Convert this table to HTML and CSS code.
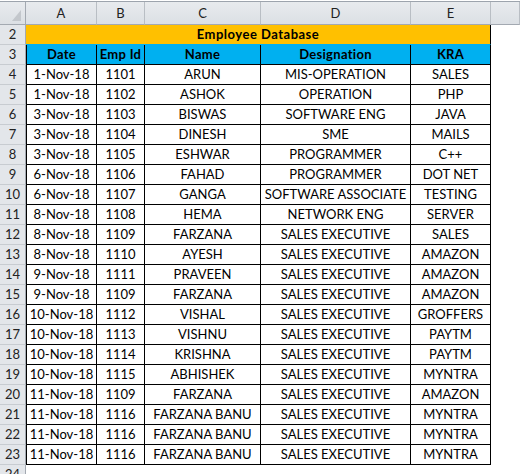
FILE: index.html
```html
<!DOCTYPE html>
<html lang="en">
<head>
<meta charset="utf-8">
<title>Employee Database</title>
<link rel="stylesheet" href="styles.css">
</head>
<body>
<div class="sheet">
  <div class="row colhead">
    <div class="corner"><svg width="25" height="22" viewBox="0 0 25 22"><polygon points="12,19 21,8 21,19" fill="#c3c7cc"/></svg></div>
    <div>A</div><div>B</div><div>C</div><div>D</div><div>E</div><div class="last"></div>
  </div>
  <div class="row"><div class="rh">2</div><div class="title">Employee Database</div><div></div></div>
  <div class="row"><div class="rh">3</div><div class="d hd first">Date</div><div class="d hd">Emp Id</div><div class="d hd">Name</div><div class="d hd">Designation</div><div class="d hd">KRA</div><div></div></div>
  <div class="row"><div class="rh">4</div><div class="d first">1-Nov-18</div><div class="d">1101</div><div class="d">ARUN</div><div class="d">MIS-OPERATION</div><div class="d">SALES</div><div></div></div>
  <div class="row"><div class="rh">5</div><div class="d first">1-Nov-18</div><div class="d">1102</div><div class="d">ASHOK</div><div class="d">OPERATION</div><div class="d">PHP</div><div></div></div>
  <div class="row"><div class="rh">6</div><div class="d first">3-Nov-18</div><div class="d">1103</div><div class="d">BISWAS</div><div class="d">SOFTWARE ENG</div><div class="d">JAVA</div><div></div></div>
  <div class="row"><div class="rh">7</div><div class="d first">3-Nov-18</div><div class="d">1104</div><div class="d">DINESH</div><div class="d">SME</div><div class="d">MAILS</div><div></div></div>
  <div class="row"><div class="rh">8</div><div class="d first">3-Nov-18</div><div class="d">1105</div><div class="d">ESHWAR</div><div class="d">PROGRAMMER</div><div class="d">C++</div><div></div></div>
  <div class="row"><div class="rh">9</div><div class="d first">6-Nov-18</div><div class="d">1106</div><div class="d">FAHAD</div><div class="d">PROGRAMMER</div><div class="d">DOT NET</div><div></div></div>
  <div class="row"><div class="rh">10</div><div class="d first">6-Nov-18</div><div class="d">1107</div><div class="d">GANGA</div><div class="d">SOFTWARE ASSOCIATE</div><div class="d">TESTING</div><div></div></div>
  <div class="row"><div class="rh">11</div><div class="d first">8-Nov-18</div><div class="d">1108</div><div class="d">HEMA</div><div class="d">NETWORK ENG</div><div class="d">SERVER</div><div></div></div>
  <div class="row"><div class="rh">12</div><div class="d first">8-Nov-18</div><div class="d">1109</div><div class="d">FARZANA</div><div class="d">SALES EXECUTIVE</div><div class="d">SALES</div><div></div></div>
  <div class="row"><div class="rh">13</div><div class="d first">8-Nov-18</div><div class="d">1110</div><div class="d">AYESH</div><div class="d">SALES EXECUTIVE</div><div class="d">AMAZON</div><div></div></div>
  <div class="row"><div class="rh">14</div><div class="d first">9-Nov-18</div><div class="d">1111</div><div class="d">PRAVEEN</div><div class="d">SALES EXECUTIVE</div><div class="d">AMAZON</div><div></div></div>
  <div class="row"><div class="rh">15</div><div class="d first">9-Nov-18</div><div class="d">1109</div><div class="d">FARZANA</div><div class="d">SALES EXECUTIVE</div><div class="d">AMAZON</div><div></div></div>
  <div class="row"><div class="rh">16</div><div class="d first">10-Nov-18</div><div class="d">1112</div><div class="d">VISHAL</div><div class="d">SALES EXECUTIVE</div><div class="d">GROFFERS</div><div></div></div>
  <div class="row"><div class="rh">17</div><div class="d first">10-Nov-18</div><div class="d">1113</div><div class="d">VISHNU</div><div class="d">SALES EXECUTIVE</div><div class="d">PAYTM</div><div></div></div>
  <div class="row"><div class="rh">18</div><div class="d first">10-Nov-18</div><div class="d">1114</div><div class="d">KRISHNA</div><div class="d">SALES EXECUTIVE</div><div class="d">PAYTM</div><div></div></div>
  <div class="row"><div class="rh">19</div><div class="d first">10-Nov-18</div><div class="d">1115</div><div class="d">ABHISHEK</div><div class="d">SALES EXECUTIVE</div><div class="d">MYNTRA</div><div></div></div>
  <div class="row"><div class="rh">20</div><div class="d first">11-Nov-18</div><div class="d">1109</div><div class="d">FARZANA</div><div class="d">SALES EXECUTIVE</div><div class="d">AMAZON</div><div></div></div>
  <div class="row"><div class="rh">21</div><div class="d first">11-Nov-18</div><div class="d">1116</div><div class="d">FARZANA BANU</div><div class="d">SALES EXECUTIVE</div><div class="d">MYNTRA</div><div></div></div>
  <div class="row"><div class="rh">22</div><div class="d first">11-Nov-18</div><div class="d">1116</div><div class="d">FARZANA BANU</div><div class="d">SALES EXECUTIVE</div><div class="d">MYNTRA</div><div></div></div>
  <div class="row"><div class="rh">23</div><div class="d first">11-Nov-18</div><div class="d">1116</div><div class="d">FARZANA BANU</div><div class="d">SALES EXECUTIVE</div><div class="d">MYNTRA</div><div></div></div>
  <div class="row"><div class="rh">24</div><div></div><div></div><div></div><div></div><div></div><div></div></div>
</div>
</body>
</html>
```

FILE: styles.css
```css
html, body {
  margin: 0;
  padding: 0;
  background: #ffffff;
  overflow: hidden;
}

.sheet {
  padding-top: 1px;
  font-family: Lato, "Liberation Sans", sans-serif;
  font-size: 13px;
  color: #000000;
}

.row {
  display: grid;
  grid-template-columns: 26px 71px 48px 116px 150px 80px 1fr;
  height: 20px;
}

.row > div {
  box-sizing: border-box;
  text-align: center;
  line-height: 19px;
  white-space: nowrap;
  overflow: hidden;
}

.colhead {
  box-sizing: border-box;
  height: 24px;
  border-top: 1px solid #9da4ad;
  background: linear-gradient(#e8ebee, #dbdfe4);
}

.colhead > div {
  border-right: 1px solid #b9bec4;
  border-bottom: 1px solid #a3a9b1;
  line-height: 22px;
  color: #222222;
}

.colhead > .corner {
  border-right-color: #a3a9b1;
}

.corner svg {
  display: block;
}

.rh {
  background: #e3e6ea;
  border-right: 1px solid #a3a9b1;
  border-bottom: 1px solid #c8ccd1;
  color: #222222;
}

.title {
  grid-column: span 5;
  background: #ffc000;
  border-right: 1px solid #000000;
  border-bottom: 1px solid #00b0f0;
  font-weight: bold;
  letter-spacing: 0.5px;
}

.d {
  border-right: 1px solid #000000;
  border-bottom: 1px solid #000000;
}

.d.first {
  border-left: 1px solid #000000;
}

.hd {
  background: #00b0f0;
  font-weight: bold;
  letter-spacing: 0.3px;
}
```
